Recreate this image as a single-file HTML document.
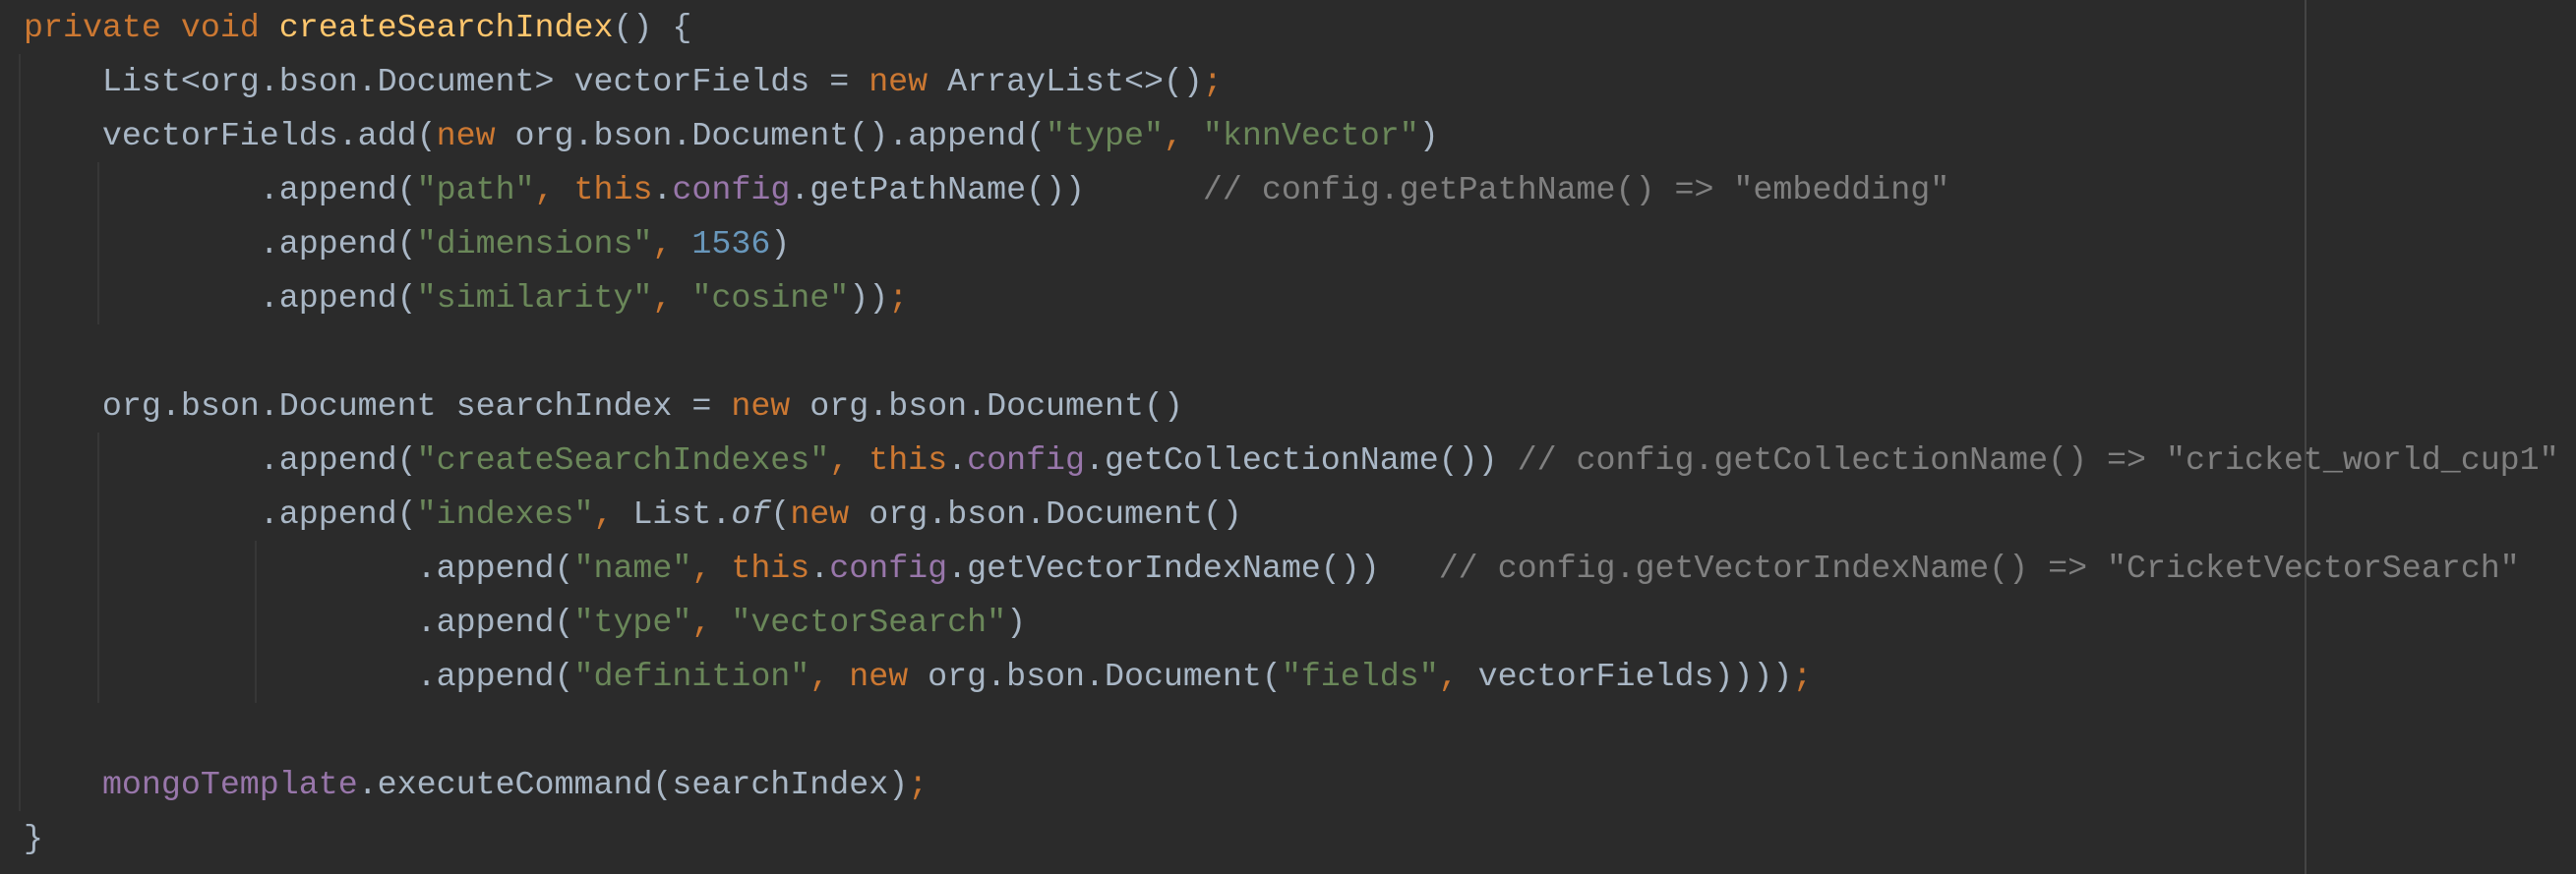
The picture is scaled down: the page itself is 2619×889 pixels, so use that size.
<!DOCTYPE html>
<html><head><meta charset="utf-8"><style>
html,body{margin:0;padding:0;background:#2b2b2b;width:2619px;height:889px;overflow:hidden}
pre{margin:0;position:absolute;left:24px;top:1px;font-family:"Liberation Mono",monospace;font-size:33.3px;line-height:55px;color:#a9b7c6;white-space:pre}
.k{color:#cc7832}.m{color:#ffc66d}.s{color:#6a8759}.n{color:#6897bb}.f{color:#9876aa}.c{color:#808080}.i{font-style:italic}
.g{position:absolute;width:2px;background:#373737}
</style></head><body>
<div class="g" style="left:19px;top:55px;height:770px"></div>
<div class="g" style="left:99px;top:165px;height:165px"></div>
<div class="g" style="left:99px;top:440px;height:275px"></div>
<div class="g" style="left:259px;top:550px;height:165px"></div>
<div style="position:absolute;left:2343px;top:0;width:2px;height:889px;background:#454545"></div>
<pre><span class="k">private void </span><span class="m">createSearchIndex</span>() {
    List&lt;org.bson.Document&gt; vectorFields = <span class="k">new </span>ArrayList&lt;&gt;()<span class="k">;</span>
    vectorFields.add(<span class="k">new </span>org.bson.Document().append(<span class="s">"type"</span><span class="k">, </span><span class="s">"knnVector"</span>)
            .append(<span class="s">"path"</span><span class="k">, this</span>.<span class="f">config</span>.getPathName())      <span class="c">// config.getPathName() =&gt; "embedding"</span>
            .append(<span class="s">"dimensions"</span><span class="k">, </span><span class="n">1536</span>)
            .append(<span class="s">"similarity"</span><span class="k">, </span><span class="s">"cosine"</span>))<span class="k">;</span>

    org.bson.Document searchIndex = <span class="k">new </span>org.bson.Document()
            .append(<span class="s">"createSearchIndexes"</span><span class="k">, this</span>.<span class="f">config</span>.getCollectionName()) <span class="c">// config.getCollectionName() =&gt; "cricket_world_cup1"</span>
            .append(<span class="s">"indexes"</span><span class="k">, </span>List.<span class="i">of</span>(<span class="k">new </span>org.bson.Document()
                    .append(<span class="s">"name"</span><span class="k">, this</span>.<span class="f">config</span>.getVectorIndexName())   <span class="c">// config.getVectorIndexName() =&gt; "CricketVectorSearch"</span>
                    .append(<span class="s">"type"</span><span class="k">, </span><span class="s">"vectorSearch"</span>)
                    .append(<span class="s">"definition"</span><span class="k">, new </span>org.bson.Document(<span class="s">"fields"</span><span class="k">, </span>vectorFields))))<span class="k">;</span>

    <span class="f">mongoTemplate</span>.executeCommand(searchIndex)<span class="k">;</span>
}</pre>
</body></html>
